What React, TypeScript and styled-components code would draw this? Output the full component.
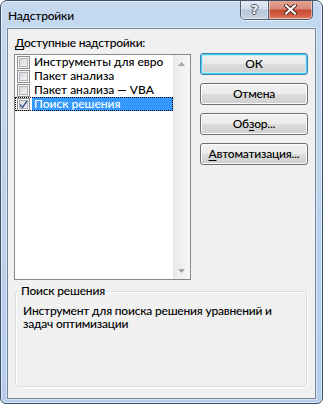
import styled, { createGlobalStyle } from "styled-components";

const GlobalStyle = createGlobalStyle`
  html, body {
    margin: 0;
    padding: 0;
    background: #ffffff;
  }
  body {
    font-family: Lato, "Noto Sans", sans-serif;
    font-size: 12px;
    font-weight: 500;
    letter-spacing: -0.2px;
    color: #000;
  }
`

const Window = styled.div`
  width: 323px;
  height: 404px;
  box-sizing: border-box;
  border: 1px solid #3b4f66;
  border-radius: 7px 7px 6px 6px;
  background: linear-gradient(to bottom, #c4d8ef 0%, #bed4ed 40%, #b5cdea 100%);
  box-shadow: inset 0 0 0 1px rgba(255, 255, 255, 0.55);
  display: flex;
  flex-direction: column;
  padding: 0 6px 4px 6px;
  overflow: hidden;
`

const TitleBar = styled.div`
  height: 27px;
  display: flex;
  align-items: flex-start;
`

const Title = styled.div`
  flex: 1;
  align-self: center;
  margin-top: 3px;
  padding-left: 1px;
  line-height: 16px;
  color: #000;
`

const CaptionButtons = styled.div`
  display: flex;
  margin-top: -1px;
  margin-right: 3px;
  border: 1px solid #4a5d75;
  border-top: none;
  border-radius: 0 0 5px 5px;
  overflow: hidden;
  box-shadow: 0 1px 0 rgba(255, 255, 255, 0.6);
`

const CaptionButton = styled.div<{ $close?: boolean }>`
  width: ${props => props.$close ? "43px" : "27px"};
  height: 19px;
  display: flex;
  align-items: center;
  justify-content: center;
  box-shadow: inset 0 0 0 1px rgba(255, 255, 255, 0.45);
  background: ${props => props.$close
    ? "linear-gradient(to bottom, #e8a595 0%, #d98b79 45%, #c74a32 55%, #d7624a 85%, #e68a6c 100%)"
    : "linear-gradient(to bottom, #e3eaf3 0%, #d3dde9 45%, #b8c6d7 55%, #c4d2e2 100%)"};
  & + & {
    border-left: 1px solid #4a5d75;
  }
`

const HelpGlyph = styled.span`
  font-family: "DejaVu Sans", sans-serif;
  font-weight: bold;
  font-size: 13px;
  line-height: 13px;
  letter-spacing: 0;
  color: #f4f6f9;
  text-shadow: 1px 0 0 #4b5668, -1px 0 0 #4b5668, 0 1px 0 #4b5668, 0 -1px 0 #4b5668;
`

const Client = styled.div`
  flex: 1;
  background: #f0f0f0;
  border: 1px solid #72869e;
  box-shadow: 0 0 0 1px rgba(255, 255, 255, 0.45);
  padding: 6px 7px 11px 6px;
  display: flex;
  flex-direction: column;
  min-height: 0;
`

const Label = styled.div`
  line-height: 16px;
  padding-left: 1px;
  margin-bottom: 2px;
`

const Accel = styled.span`
  text-decoration: underline;
  text-underline-offset: 2px;
`

const MainRow = styled.div`
  display: flex;
  gap: 9px;
  align-items: flex-start;
`

const ListBox = styled.div`
  width: 177px;
  height: 226px;
  box-sizing: border-box;
  margin-top: 1px;
  border: 1px solid #828790;
  background: #fff;
  display: flex;
`

const Items = styled.div`
  flex: 1;
  display: flex;
  flex-direction: column;
`

const Item = styled.div<{ $focused?: boolean }>`
  height: 14px;
  display: flex;
  align-items: center;
  padding-left: 2px;
  outline: ${props => props.$focused ? "1px dotted #000" : "none"};
  outline-offset: -1px;
`

const Box = styled.div`
  width: 13px;
  height: 13px;
  box-sizing: border-box;
  border: 1px solid #8e8f8f;
  background: linear-gradient(135deg, #cbcfd5 0%, #e7e8ea 55%, #f7f7f7 100%);
  box-shadow: inset 0 0 0 1px #f4f4f4, inset 0 0 0 2px #b1b5bb;
  display: flex;
  align-items: center;
  justify-content: center;
  flex-shrink: 0;
`

const ItemText = styled.span<{ $selected?: boolean }>`
  margin-left: 2px;
  padding: 0 2px;
  flex: 1;
  line-height: 14px;
  white-space: nowrap;
  letter-spacing: 0;
  color: ${props => props.$selected ? "#fff" : "#000"};
  background: ${props => props.$selected ? "#3399ff" : "transparent"};
`

const ScrollBar = styled.div`
  width: 17px;
  display: flex;
  flex-direction: column;
  justify-content: space-between;
  background: linear-gradient(to right, #e9e9e9, #f6f6f6);
`

const Arrow = styled.div`
  height: 17px;
  display: flex;
  align-items: center;
  justify-content: center;
`

const Buttons = styled.div`
  display: flex;
  flex-direction: column;
  gap: 8px;
`

const Button = styled.div<{ $default?: boolean }>`
  width: 108px;
  height: 22px;
  box-sizing: border-box;
  border: 1px solid ${props => props.$default ? "#3c7fb1" : "#707070"};
  border-radius: 3px;
  background: linear-gradient(to bottom, #f2f2f2 0%, #ebebeb 50%, #dddddd 50%, #cfcfcf 100%);
  box-shadow: ${props => props.$default
    ? "inset 0 0 0 1px #48d0f7, inset 0 0 0 2px #bde9f8"
    : "inset 0 0 0 1px #fcfcfc"};
  display: flex;
  align-items: center;
  justify-content: center;
  line-height: 16px;
`

const Group = styled.fieldset`
  flex: 1;
  margin: 4px 1px 0 1px;
  padding: 6px 7px;
  border: 1px solid #d5dfe5;
  border-radius: 3px;
  box-shadow: inset 1px 1px 0 #fff, 1px 1px 0 #fff;
  min-width: 0;
`

const Legend = styled.legend`
  margin-left: -3px;
  padding: 0 1px;
  line-height: 14px;
`

const Description = styled.div`
  line-height: 13px;
`

const CheckMark = () => (
  <svg width="9" height="9" viewBox="0 0 9 9">
    <path d="M1 4.5 L3.5 7.5 L8 1" fill="none" stroke="#4a5f97" strokeWidth="1.6" />
  </svg>
)

const ArrowIcon = ({ up }: { up?: boolean }) => (
  <svg width="7" height="4" viewBox="0 0 7 4">
    <path d={up ? "M0 4 L3.5 0 L7 4 Z" : "M0 0 L3.5 4 L7 0 Z"} fill="#a3a3a3" />
  </svg>
)

const CloseIcon = () => (
  <svg width="13" height="11" viewBox="0 0 13 11">
    <path d="M2 1.5 L11 9.5 M11 1.5 L2 9.5" stroke="#4d2a22" strokeWidth="4" strokeLinecap="square" />
    <path d="M2 1.5 L11 9.5 M11 1.5 L2 9.5" stroke="#ffffff" strokeWidth="2" strokeLinecap="square" />
  </svg>
)

const addins = [
  { name: "Инструменты для евро", checked: false },
  { name: "Пакет анализа", checked: false },
  { name: "Пакет анализа — VBA", checked: false },
  { name: "Поиск решения", checked: true },
]

export default function App() {
  return (
    <>
      <GlobalStyle />
      <Window>
        <TitleBar>
          <Title>Надстройки</Title>
          <CaptionButtons>
            <CaptionButton><HelpGlyph>?</HelpGlyph></CaptionButton>
            <CaptionButton $close><CloseIcon /></CaptionButton>
          </CaptionButtons>
        </TitleBar>
        <Client>
          <Label><Accel>Д</Accel>оступные надстройки:</Label>
          <MainRow>
            <ListBox>
              <Items>
                {addins.map(a => (
                  <Item key={a.name} $focused={a.checked}>
                    <Box>{a.checked && <CheckMark />}</Box>
                    <ItemText $selected={a.checked}>{a.name}</ItemText>
                  </Item>
                ))}
              </Items>
              <ScrollBar>
                <Arrow><ArrowIcon up /></Arrow>
                <Arrow><ArrowIcon /></Arrow>
              </ScrollBar>
            </ListBox>
            <Buttons>
              <Button $default>ОК</Button>
              <Button>Отмена</Button>
              <Button>Об<Accel>з</Accel>ор...</Button>
              <Button><Accel>А</Accel>втоматизация...</Button>
            </Buttons>
          </MainRow>
          <Group>
            <Legend>Поиск решения</Legend>
            <Description>Инструмент для поиска решения уравнений и задач оптимизации</Description>
          </Group>
        </Client>
      </Window>
    </>
  )
}
